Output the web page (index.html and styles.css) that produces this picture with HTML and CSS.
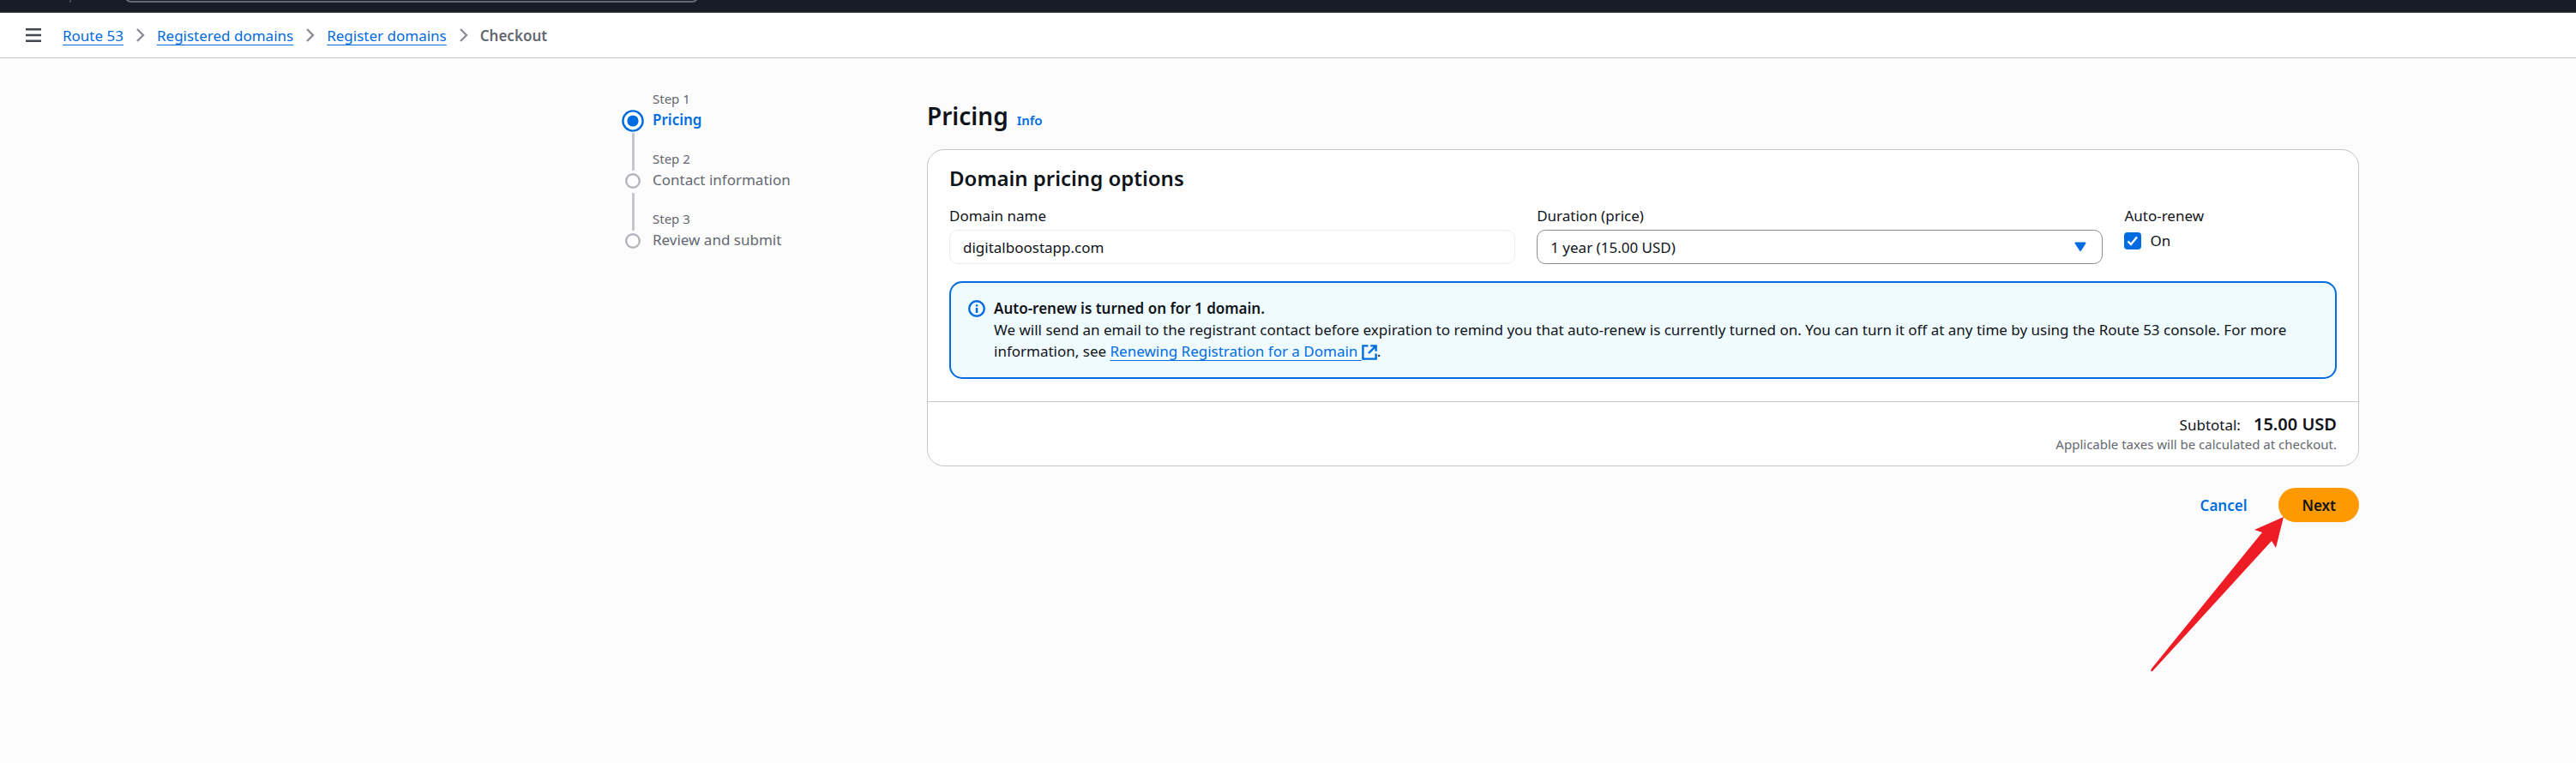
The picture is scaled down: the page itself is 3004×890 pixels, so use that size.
FILE: index.html
```html
<!DOCTYPE html>
<html lang="en">
<head>
<meta charset="utf-8">
<meta name="viewport" content="width=device-width, initial-scale=1">
<title>Checkout - Route 53</title>
<link rel="stylesheet" href="styles.css">
</head>
<body>
<header class="topbar">
  <span class="topbar-divider"></span>
  <input class="topbar-search" type="search" aria-label="Search">
</header>

<nav class="crumbs" aria-label="Breadcrumbs">
  <button class="menu-button" type="button" aria-label="Open navigation">
    <svg viewBox="0 0 18 16" width="18" height="16"><path d="M0 1.2h18M0 8h18M0 14.8h18" stroke="#424650" stroke-width="2.4"/></svg>
  </button>
  <ol class="crumb-list">
    <li><a class="link" href="#">Route 53</a><svg class="chevron" viewBox="0 0 10 16" width="10" height="16"><path d="M1 1l7 7-7 7"/></svg></li>
    <li><a class="link" href="#">Registered domains</a><svg class="chevron" viewBox="0 0 10 16" width="10" height="16"><path d="M1 1l7 7-7 7"/></svg></li>
    <li><a class="link" href="#">Register domains</a><svg class="chevron" viewBox="0 0 10 16" width="10" height="16"><path d="M1 1l7 7-7 7"/></svg></li>
    <li><span class="crumb-current" aria-current="page">Checkout</span></li>
  </ol>
</nav>

<main class="wizard">
  <ol class="steps">
    <li class="step">
      <span class="step-rail">
        <svg viewBox="0 0 26 26" width="26" height="26"><circle cx="13" cy="13" r="11.6" fill="#fff" stroke="#006ce0" stroke-width="2.4"/><circle cx="13" cy="13" r="6.6" fill="#006ce0"/></svg>
        <span class="step-line"></span>
      </span>
      <span class="step-text"><span class="step-label">Step 1</span><span class="step-name step-active">Pricing</span></span>
    </li>
    <li class="step">
      <span class="step-rail">
        <svg viewBox="0 0 26 26" width="26" height="26"><circle cx="13" cy="13" r="7.8" fill="#fff" stroke="#b4b4bb" stroke-width="2.4"/></svg>
        <span class="step-line"></span>
      </span>
      <span class="step-text"><span class="step-label">Step 2</span><span class="step-name">Contact information</span></span>
    </li>
    <li class="step">
      <span class="step-rail">
        <svg viewBox="0 0 26 26" width="26" height="26"><circle cx="13" cy="13" r="7.8" fill="#fff" stroke="#b4b4bb" stroke-width="2.4"/></svg>
      </span>
      <span class="step-text"><span class="step-label">Step 3</span><span class="step-name">Review and submit</span></span>
    </li>
  </ol>

  <form class="content">
    <div class="page-head">
      <h1>Pricing</h1>
      <a class="info" href="#">Info</a>
    </div>

    <section class="card">
      <div class="card-body">
        <h2>Domain pricing options</h2>
        <div class="fields">
          <div class="field">
            <label for="domain">Domain name</label>
            <input class="control control-readonly" id="domain" type="text" value="digitalboostapp.com" readonly>
          </div>
          <div class="field">
            <label for="duration">Duration (price)</label>
            <div class="select-wrap">
              <select class="control" id="duration"><option>1 year (15.00 USD)</option></select>
              <svg class="caret" viewBox="0 0 14 12" width="14" height="12"><path d="M1.5 1.5h11L7 10z" fill="#006ce0" stroke="#006ce0" stroke-width="2" stroke-linejoin="round"/></svg>
            </div>
          </div>
          <div class="field">
            <span>Auto-renew</span>
            <label class="check"><input type="checkbox" checked><svg class="tick" viewBox="0 0 20 20" width="20" height="20"><path d="M4.500 10.500l3.500 3.500L15 5.500" fill="none" stroke="#fff" stroke-width="2.4"/></svg>On</label>
          </div>
        </div>
        <div class="alert" role="status">
          <svg class="alert-icon" viewBox="0 0 20 20" width="20" height="20"><circle cx="10" cy="10" r="8.8" fill="none" stroke="#006ce0" stroke-width="2.4"/><path d="M8.8 5.2h2.5v2.2H8.8zM8.8 9h2.5v6H8.8z" fill="#006ce0"/></svg>
          <div class="alert-text">
            <strong>Auto-renew is turned on for 1 domain.</strong>
            <p>We will send an email to the registrant contact before expiration to remind you that auto-renew is currently turned on. You can turn it off at any time by using the Route 53 console. For more information, see <a class="link" href="#">Renewing Registration for a Domain&nbsp;</a><svg class="external" viewBox="0 0 18 18" width="18" height="18"><path d="M7.5 1.4H1.4v15.2h15.2v-6.1M10.2 1.4h6.4v6.4M16.4 1.6L8 10" fill="none" stroke="#006ce0" stroke-width="2.4"/></svg>.</p>
          </div>
        </div>
      </div>
      <div class="card-footer">
        <div class="subtotal"><span>Subtotal:</span><strong>15.00 USD</strong></div>
        <small>Applicable taxes will be calculated at checkout.</small>
      </div>
    </section>

    <div class="actions">
      <button class="button" type="button">Cancel</button>
      <button class="button button-primary" type="submit">Next</button>
      <svg class="arrow" viewBox="0 0 156 182" width="156" height="182"><polygon points="155,1 121,16 130,19 1,178 0,181 2,181 141,29 146,37" fill="#ee1c25"/></svg>
    </div>
  </form>
</main>
</body>
</html>
```
FILE: styles.css
```css
* {
  box-sizing: border-box;
}

body {
  margin: 0;
  background: #fcfcfd;
  color: #0f141a;
  font-family: "Noto Sans", "Open Sans", sans-serif;
  font-size: 17px;
  line-height: 25px;
}

h1, h2, p, ol {
  margin: 0;
  padding: 0;
}

h1, h2, strong {
  font-weight: 600;
}

ol {
  list-style: none;
}

input, select, button {
  font: inherit;
  color: inherit;
}

svg {
  flex: none;
}

.topbar {
  display: flex;
  align-items: flex-end;
  height: 15px;
  overflow: hidden;
  padding: 0 81px 11px;
  background: #161d26;
  border-bottom: 1px solid #424650;
}

.topbar-divider {
  width: 2px;
  height: 30px;
  background: #424650;
}

.topbar-search {
  width: 670px;
  height: 40px;
  margin: 0 0 0 62px;
  background: #161d26;
  border: 2px solid #656871;
  border-radius: 8px;
}

.crumbs {
  display: flex;
  align-items: center;
  gap: 25px;
  height: 53px;
  padding: 0 30px;
  background: #fff;
  border-bottom: 1px solid #c6c6cd;
}

.menu-button {
  display: flex;
  padding: 0;
  border: 0;
  background: none;
}

.crumb-list,
.crumb-list li {
  display: flex;
  align-items: center;
}

.link {
  color: #006ce0;
  text-decoration: underline;
  text-decoration-thickness: 1px;
  text-decoration-skip-ink: none;
  text-underline-offset: 4px;
}

.chevron {
  margin: 0 14px 0 15px;
  fill: none;
  stroke: #8c8c94;
  stroke-width: 2.4;
}

.crumb-current {
  color: #656871;
  font-weight: 600;
}

.wizard {
  display: grid;
  grid-template-columns: 356px minmax(0, 1fr);
  max-width: 2026px;
  margin: 0 253px 0 auto;
  padding: 36px 0 100px;
}

.step {
  display: flex;
  gap: 10px;
  height: 70px;
}

.step-rail {
  display: flex;
  flex-direction: column;
  align-items: center;
  gap: 1px;
  padding-top: 24px;
}

.step-line {
  flex: none;
  width: 3px;
  height: 44px;
}

.step-line {
  background: #c6c6cd;
}

.step-text {
  display: flex;
  flex-direction: column;
  color: #656871;
}

.step-label {
  font-size: 15px;
  line-height: 23px;
}

.step-active {
  color: #006ce0;
  font-weight: 600;
}

.page-head {
  display: flex;
  align-items: baseline;
  gap: 10px;
  padding: 12px 0 20px;
}

h1 {
  font-size: 28px;
  line-height: 38px;
}

.info {
  color: #006ce0;
  font-size: 15px;
  font-weight: 600;
  text-decoration: none;
}

.card {
  background: #fff;
  border: 1px solid #c6c6cd;
  border-radius: 20px;
}

.card-body {
  padding: 18px 25px 26px;
}

h2 {
  font-size: 24px;
  line-height: 30px;
}

.fields {
  display: grid;
  grid-template-columns: 8fr 8fr 3fr;
  gap: 25px;
  padding: 16px 0 20px;
}

.field {
  display: flex;
  flex-direction: column;
  gap: 4px;
}

.control {
  width: 100%;
  height: 40px;
  padding: 0 15px;
  background: #fff;
  border: 1px solid #8c8c94;
  border-radius: 10px;
  appearance: none;
}

.control-readonly {
  border-color: #ebebf0;
}

.select-wrap {
  position: relative;
}

.caret {
  position: absolute;
  top: 14px;
  right: 19px;
  pointer-events: none;
}

.check {
  position: relative;
  display: flex;
  align-items: center;
  gap: 10px;
}

.check input {
  width: 20px;
  height: 20px;
  margin: 0;
  background: #006ce0;
  border-radius: 4px;
  appearance: none;
}

.tick {
  position: absolute;
  left: 0;
}

.alert {
  display: flex;
  gap: 10px;
  padding: 17px 20px 18px;
  background: #f0fbff;
  border: 2px solid #006ce0;
  border-radius: 15px;
}

.alert-icon {
  margin-top: 3px;
}

.external {
  vertical-align: middle;
}

.card-footer {
  display: flex;
  flex-direction: column;
  align-items: flex-end;
  padding: 13px 25px 15px;
  border-top: 1px solid #c6c6cd;
}

.subtotal {
  display: flex;
  align-items: baseline;
  gap: 15px;
}

.subtotal strong {
  font-size: 20px;
}

.card-footer small {
  color: #656871;
  font-size: 15px;
  line-height: 20px;
}

.actions {
  position: relative;
  display: flex;
  justify-content: flex-end;
  gap: 10px;
  padding: 25px 0 180px;
}

.button {
  height: 40px;
  padding: 0 27px;
  background: none;
  border: 0;
  border-radius: 20px;
  color: #006ce0;
  font-weight: 600;
}

.button-primary {
  background: #ff9900;
  color: #0f141a;
}

.arrow {
  position: absolute;
  top: 58px;
  right: 87px;
}
```
